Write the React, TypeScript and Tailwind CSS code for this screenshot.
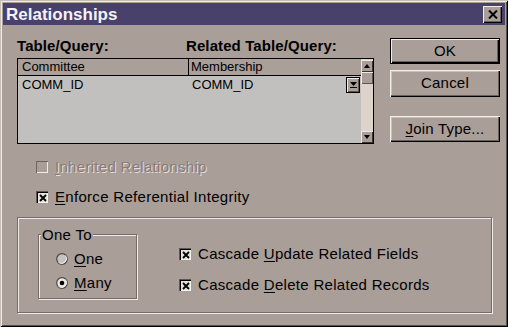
import React from "react";

const font = { fontFamily: '"Liberation Sans", Arial, sans-serif' };

function Key({ children }: { children: React.ReactNode }) {
  return <span className="underline underline-offset-2">{children}</span>;
}

function Button({
  children,
  isDefault,
  className = "",
}: {
  children: React.ReactNode;
  isDefault?: boolean;
  className?: string;
}) {
  return (
    <div
      className={`w-[110px] flex items-center justify-center bg-[#aa9e98] text-[15px] tracking-[0.2px] text-black ${
        isDefault
          ? "border border-black shadow-[inset_1px_1px_0_#f4eeea,inset_-1px_-1px_0_#000,inset_-2px_-2px_0_#6a605c]"
          : "shadow-[inset_1px_1px_0_#f4eeea,inset_-1px_-1px_0_#000,inset_-2px_-2px_0_#6a605c,inset_2px_2px_0_#c8beb8]"
      } ${className}`}
    >
      {children}
    </div>
  );
}

function CheckBox({ checked, disabled }: { checked?: boolean; disabled?: boolean }) {
  return (
    <div
      className={`w-[12px] h-[12px] shrink-0 flex items-center justify-center ${
        disabled
          ? "bg-[#aa9e98] shadow-[inset_1px_1px_0_#6e6460,inset_-1px_-1px_0_#f2ece8]"
          : "bg-[#e6e2de] shadow-[inset_1px_1px_0_#5e5450,inset_2px_2px_0_#000,inset_-1px_-1px_0_#f6f2ee]"
      }`}
    >
      {checked && (
        <svg width="8" height="8" viewBox="0 0 8 8" className="ml-[1px] mt-[1px]">
          <path d="M1 1 L7 7 M7 1 L1 7" stroke="#000" strokeWidth="1.8" />
        </svg>
      )}
    </div>
  );
}

function Radio({ checked }: { checked?: boolean }) {
  return (
    <svg width="12" height="12" viewBox="0 0 12 12" className="shrink-0">
      <circle cx="6" cy="6" r="5.3" fill={checked ? "#ece8e4" : "#c6c2c0"} stroke="#4e4642" strokeWidth="1.2" />
      <path d="M2.5 9.5 A5 5 0 0 0 9.5 2.5" fill="none" stroke="#f4f0ec" strokeWidth="1" />
      {checked && <circle cx="6" cy="6" r="2.3" fill="#000" />}
    </svg>
  );
}

function ArrowBtn({ dir }: { dir: "up" | "down" }) {
  return (
    <div className="h-[12px] w-[12px] bg-[#aa9e98] flex items-center justify-center shadow-[inset_1px_1px_0_#f0eae6,inset_-1px_-1px_0_#3e3632]">
      <svg width="6" height="4" viewBox="0 0 6 4">
        {dir === "up" ? <path d="M3 0 L6 4 L0 4 Z" fill="#000" /> : <path d="M0 0 L6 0 L3 4 Z" fill="#000" />}
      </svg>
    </div>
  );
}

export default function App() {
  return (
    <div
      style={font}
      className="w-[508px] h-[327px] bg-[#aa9e98] text-black overflow-hidden shadow-[inset_1px_1px_0_#c8beb8,inset_-1px_-1px_0_#000,inset_2px_2px_0_#f2ece8,inset_-2px_-2px_0_#5a504c] pt-[3px] px-[3px]"
    >
      {/* Title bar */}
      <div className="h-[22px] bg-[#47416c] flex items-center justify-between pl-[3px] pr-[3px]">
        <span className="text-[17px] font-bold text-[#f4f2f6] leading-none">Relationships</span>
        <div className="w-[19px] h-[17px] bg-[#aa9e98] flex items-center justify-center shadow-[inset_1px_1px_0_#f2ece8,inset_-1px_-1px_0_#000,inset_-2px_-2px_0_#6a605c]">
          <svg width="10" height="9" viewBox="0 0 10 9">
            <path d="M1 0.5 L9 8.5 M9 0.5 L1 8.5" stroke="#000" strokeWidth="2" />
          </svg>
        </div>
      </div>

      <div className="pl-[14px]">
        {/* Top area: list and buttons */}
        <div className="flex pt-[13px]">
          <div className="w-[357px]">
            <div className="grid grid-cols-[169px_1fr] text-[15px] font-bold leading-[15px] h-[15px] tracking-[0.1px]">
              <span>Table/Query:</span>
              <span>Related Table/Query:</span>
            </div>
            <div className="mt-[5px] h-[86px] flex border border-black bg-[#c2c0be]">
              <div className="flex-1 flex flex-col text-[13px]">
                <div className="h-[17px] flex bg-[#ab9f99] border-b border-black leading-[16px]">
                  <div className="w-[171px] pl-[4px] border-r border-black">Committee</div>
                  <div className="pl-[2px]">Membership</div>
                </div>
                <div className="h-[17px] flex items-center leading-[16px]">
                  <div className="w-[172px] pl-[4px]">COMM_ID</div>
                  <div className="flex-1 pl-[2px]">COMM_ID</div>
                  <div className="w-[14px] h-[16px] mr-[1px] border border-black bg-[#aa9e98] flex flex-col items-center justify-center gap-[1px] shadow-[inset_1px_1px_0_#f0eae6,inset_-1px_-1px_0_#5e5450]">
                    <svg width="7" height="4" viewBox="0 0 7 4">
                      <path d="M0 0 L7 0 L3.5 4 Z" fill="#000" />
                    </svg>
                    <div className="w-[7px] h-[1px] bg-black" />
                  </div>
                </div>
              </div>
              <div className="w-[12px] flex flex-col bg-[#dcd4ca] pt-[1px]">
                <ArrowBtn dir="up" />
                <div className="h-[12px] bg-[#aa9e98] shadow-[inset_1px_1px_0_#f0eae6,inset_-1px_-1px_0_#5e5450]" />
                <div className="flex-1" />
                <ArrowBtn dir="down" />
              </div>
            </div>
          </div>

          <div className="ml-[16px] flex flex-col">
            <Button isDefault className="h-[26px]">OK</Button>
            <Button className="h-[27px] mt-[6px]">Cancel</Button>
            <Button className="h-[26px] mt-[19px]">
              <span>
                <Key>J</Key>oin Type...
              </span>
            </Button>
          </div>
        </div>

        {/* Relationship options */}
        <div className="pl-[19px] mt-[16px] flex flex-col gap-[16px] text-[15px] leading-[14px] tracking-[0.3px]">
          <div className="h-[14px] flex items-center gap-[7px]">
            <CheckBox disabled />
            <span className="text-[#877c78] [text-shadow:1px_1px_0_#e6deda]">
              <Key>I</Key>nherited Relationship
            </span>
          </div>
          <div className="h-[14px] flex items-center gap-[7px]">
            <CheckBox checked />
            <span>
              <Key>E</Key>nforce Referential Integrity
            </span>
          </div>
        </div>

        {/* Integrity frame */}
        <div className="mt-[13px] w-[475px] h-[96px] border border-[#776c68] shadow-[inset_1px_1px_0_#f2ece8,1px_1px_0_#f2ece8] flex pl-[20px] pt-[16px] text-[15px] tracking-[0.3px]">
          <div className="relative w-[99px] h-[65px] border border-[#776c68] shadow-[inset_1px_1px_0_#f2ece8,1px_1px_0_#f2ece8]">
            <span className="absolute left-[2px] top-[-8px] bg-[#aa9e98] px-[1px] leading-[15px]">One To</span>
            <div className="flex flex-col pl-[17px] pt-[17px] gap-[10px] leading-[14px]">
              <div className="flex items-center gap-[6px] h-[14px]">
                <Radio />
                <span>
                  <Key>O</Key>ne
                </span>
              </div>
              <div className="flex items-center gap-[6px] h-[14px]">
                <Radio checked />
                <span>
                  <Key>M</Key>any
                </span>
              </div>
            </div>
          </div>
          <div className="ml-[42px] pt-[13px] flex flex-col gap-[17px] leading-[14px]">
            <div className="h-[14px] flex items-center gap-[7px]">
              <CheckBox checked />
              <span>
                Cascade <Key>U</Key>pdate Related Fields
              </span>
            </div>
            <div className="h-[14px] flex items-center gap-[7px]">
              <CheckBox checked />
              <span>
                Cascade <Key>D</Key>elete Related Records
              </span>
            </div>
          </div>
        </div>
      </div>
    </div>
  );
}
